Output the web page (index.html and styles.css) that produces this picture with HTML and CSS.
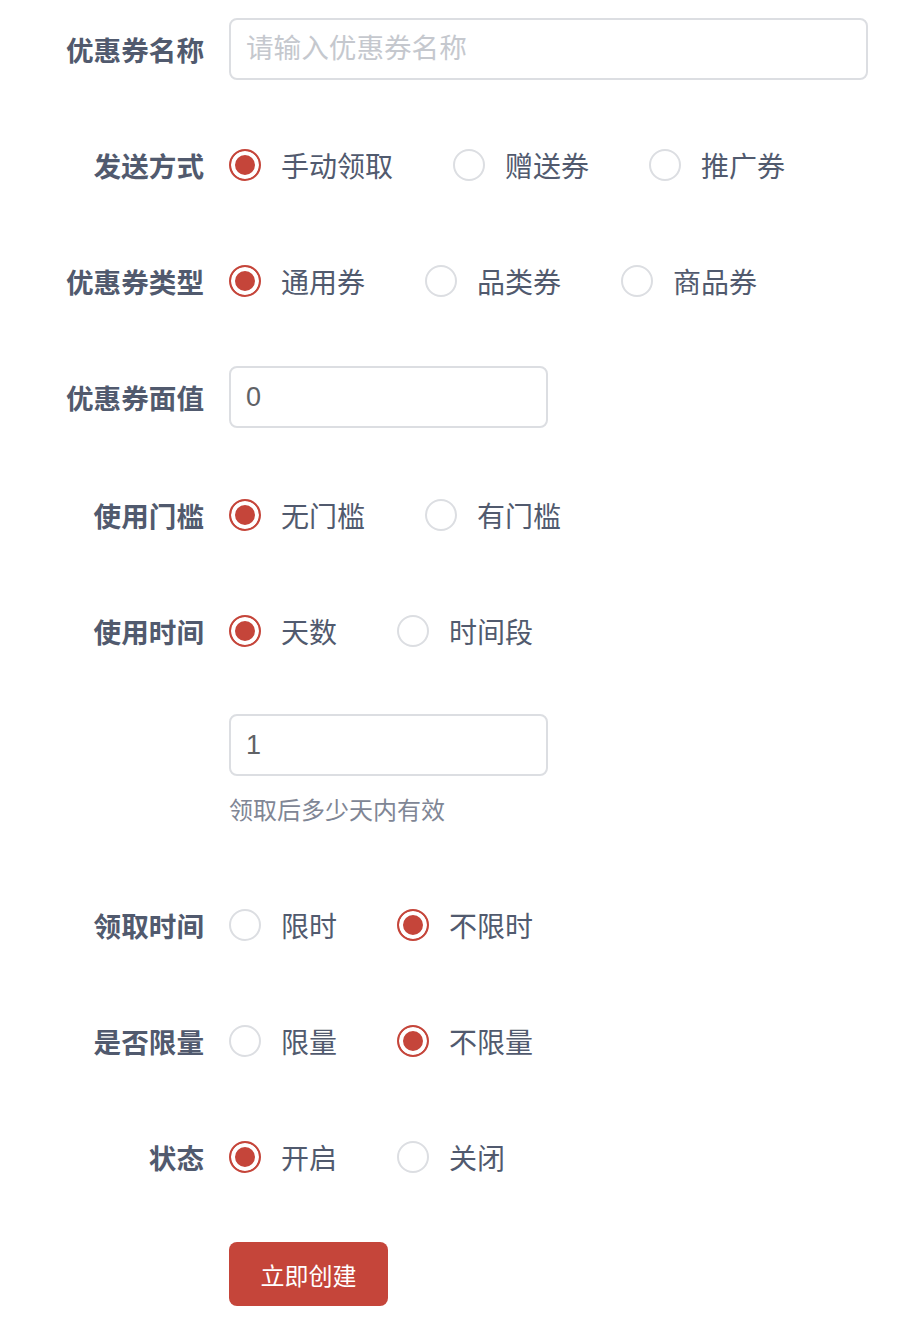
FILE: index.html
```html
<!DOCTYPE html>
<html lang="zh-CN">
<head>
  <meta charset="UTF-8">
  <title>创建优惠券</title>
  <link rel="stylesheet" href="styles.css">
</head>
<body>
  <form class="coupon-form">
    <div class="form-item">
      <label class="form-label">优惠券名称</label>
      <div class="form-control">
        <input class="text-input wide" type="text" placeholder="请输入优惠券名称">
      </div>
    </div>

    <div class="form-item">
      <label class="form-label">发送方式</label>
      <div class="form-control radio-group">
        <span class="radio checked"><span class="radio-dot"></span>手动领取</span>
        <span class="radio"><span class="radio-dot"></span>赠送券</span>
        <span class="radio"><span class="radio-dot"></span>推广券</span>
      </div>
    </div>

    <div class="form-item">
      <label class="form-label">优惠券类型</label>
      <div class="form-control radio-group">
        <span class="radio checked"><span class="radio-dot"></span>通用券</span>
        <span class="radio"><span class="radio-dot"></span>品类券</span>
        <span class="radio"><span class="radio-dot"></span>商品券</span>
      </div>
    </div>

    <div class="form-item spaced">
      <label class="form-label">优惠券面值</label>
      <div class="form-control">
        <input class="text-input short" type="text" value="0">
      </div>
    </div>

    <div class="form-item">
      <label class="form-label">使用门槛</label>
      <div class="form-control radio-group">
        <span class="radio checked"><span class="radio-dot"></span>无门槛</span>
        <span class="radio"><span class="radio-dot"></span>有门槛</span>
      </div>
    </div>

    <div class="form-item">
      <label class="form-label">使用时间</label>
      <div class="form-control">
        <div class="radio-group">
          <span class="radio checked"><span class="radio-dot"></span>天数</span>
          <span class="radio"><span class="radio-dot"></span>时间段</span>
        </div>
        <div class="sub-field">
          <input class="text-input short" type="text" value="1">
          <p class="help-text">领取后多少天内有效</p>
        </div>
      </div>
    </div>

    <div class="form-item">
      <label class="form-label">领取时间</label>
      <div class="form-control radio-group">
        <span class="radio"><span class="radio-dot"></span>限时</span>
        <span class="radio checked"><span class="radio-dot"></span>不限时</span>
      </div>
    </div>

    <div class="form-item">
      <label class="form-label">是否限量</label>
      <div class="form-control radio-group">
        <span class="radio"><span class="radio-dot"></span>限量</span>
        <span class="radio checked"><span class="radio-dot"></span>不限量</span>
      </div>
    </div>

    <div class="form-item">
      <label class="form-label">状态</label>
      <div class="form-control radio-group">
        <span class="radio checked"><span class="radio-dot"></span>开启</span>
        <span class="radio"><span class="radio-dot"></span>关闭</span>
      </div>
    </div>

    <div class="form-item">
      <div class="form-label"></div>
      <div class="form-control">
        <button type="button" class="submit-btn">立即创建</button>
      </div>
    </div>
  </form>
</body>
</html>
```

FILE: styles.css
```css
body {
  margin: 0;
  background: #fff;
  font-family: "Noto Sans CJK SC", "Noto Sans", sans-serif;
  color: #515a6e;
}
.coupon-form {
  padding-top: 18px;
}
.form-item {
  display: flex;
  align-items: flex-start;
  margin-bottom: 54px;
}
.form-item.spaced {
  margin-bottom: 56px;
}
.form-label {
  flex: none;
  width: 204px;
  text-align: right;
  font-size: 27.6px;
  font-weight: 700;
  line-height: 62px;
  color: #515a6e;
}
.form-control {
  margin-left: 25px;
}
.radio-group {
  display: flex;
  align-items: center;
  height: 62px;
}
.radio {
  display: flex;
  align-items: center;
  margin-right: 60px;
  font-size: 28px;
  color: #515a6e;
}
.radio-dot {
  box-sizing: border-box;
  width: 32px;
  height: 32px;
  margin-right: 20px;
  border: 2px solid #dcdee2;
  border-radius: 50%;
  background: #fff;
}
.radio.checked .radio-dot {
  border-color: #c5453a;
  background: #c5453a;
  box-shadow: inset 0 0 0 4px #fff;
}
.text-input {
  box-sizing: border-box;
  height: 62px;
  padding: 0 15px;
  border: 2px solid #dcdee2;
  border-radius: 8px;
  font-family: "Liberation Sans", "Noto Sans CJK SC", sans-serif;
  font-size: 27px;
  color: #606266;
  outline: none;
}
.text-input::placeholder {
  font-family: "Noto Sans CJK SC", sans-serif;
  font-size: 27.6px;
  color: #c5c8ce;
}
.text-input.wide {
  width: 639px;
}
.text-input.short {
  width: 319px;
}
.sub-field {
  margin-top: 52px;
}
.help-text {
  margin: 15px 0 0;
  padding-bottom: 13px;
  font-size: 24px;
  line-height: 36px;
  color: #808695;
}
.submit-btn {
  width: 159px;
  height: 64px;
  border: none;
  border-radius: 8px;
  background: #c5453a;
  color: #fff;
  font-family: inherit;
  font-size: 24px;
  cursor: pointer;
}
```
